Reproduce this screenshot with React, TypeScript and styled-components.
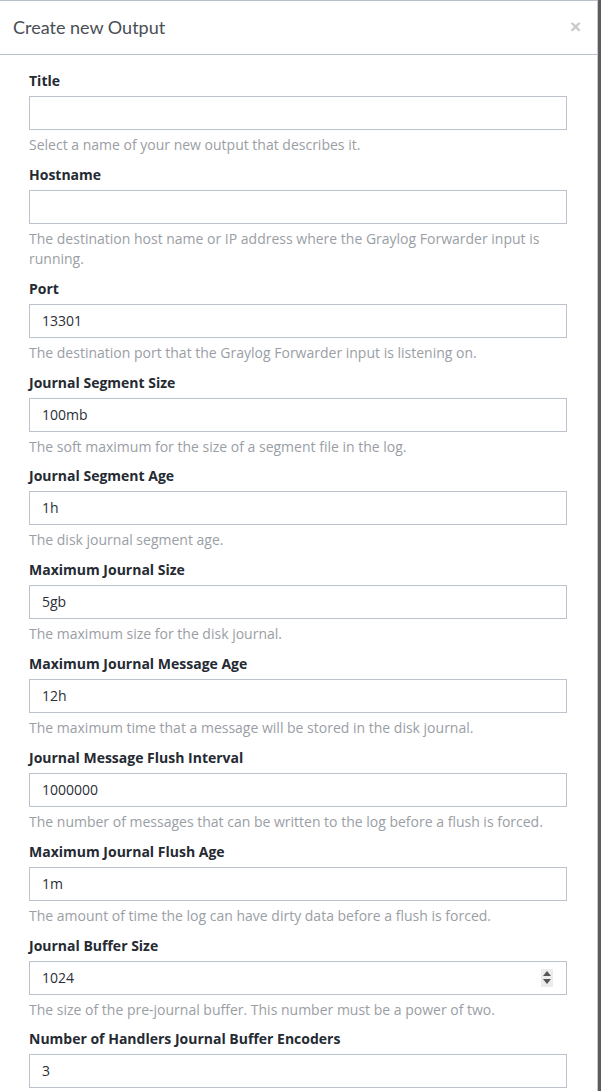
import React from "react";
import styled, { createGlobalStyle } from "styled-components";

const Global = createGlobalStyle`
  html, body { margin: 0; padding: 0; background: #5a5a5a; }
  body { font-family: "Open Sans", sans-serif; }
  * { box-sizing: border-box; }
`;

const Page = styled.div`
  width: 601px;
  height: 1091px;
  overflow: hidden;
  background: #5c5c5c;
`;

const Modal = styled.div`
  width: 598px;
  height: 1091px;
  background: #fff;
  border-top: 1px solid #b8c0cc;
  border-right: 1px solid #c3c9d2;
  display: flex;
  flex-direction: column;
`;

const Header = styled.div`
  height: 54px;
  flex: none;
  display: flex;
  align-items: center;
  justify-content: space-between;
  padding: 0 16px 0 13px;
  border-bottom: 1px solid #b9c1cc;
`;

const HeaderTitle = styled.h4`
  margin: 0;
  font-family: Lato, sans-serif;
  font-size: 18px;
  font-weight: 400;
  color: #4a4e55;
  padding-bottom: 2px;
`;

const Close = styled.span`
  font-size: 19px;
  line-height: 1;
  color: #c8c8c8;
  font-weight: 700;
  margin-top: -3px;
  font-family: "Liberation Sans", sans-serif;
`;

const Body = styled.div`
  padding: 16px 30px 0 29px;
`;

const Group = styled.div`
  margin-bottom: 9.85px;
`;

const Label = styled.label`
  display: block;
  font-size: 14px;
  line-height: 20px;
  font-weight: 700;
  color: #252a33;
  margin-bottom: 5px;
`;

const InputWrap = styled.div`
  position: relative;
`;

const Input = styled.div`
  height: 34px;
  width: 100%;
  border: 1px solid #bcc3cf;
  padding: 0 12px;
  font-size: 14px;
  line-height: 32px;
  color: #2b2f36;
`;

const Spinner = styled.div`
  position: absolute;
  right: 14px;
  top: 8px;
  width: 12px;
  height: 18px;
  background: #ececec;
  display: flex;
  flex-direction: column;
  align-items: center;
  justify-content: center;
  gap: 3px;
`;

const Help = styled.div`
  margin-top: 5px;
  font-size: 14px;
  line-height: 20px;
  color: #9a9ea5;
`;

type Field = { label: string; value?: string; help?: string; number?: boolean };

const fields: Field[] = [
  { label: "Title", help: "Select a name of your new output that describes it." },
  { label: "Hostname", help: "The destination host name or IP address where the Graylog Forwarder input is running." },
  { label: "Port", value: "13301", help: "The destination port that the Graylog Forwarder input is listening on." },
  { label: "Journal Segment Size", value: "100mb", help: "The soft maximum for the size of a segment file in the log." },
  { label: "Journal Segment Age", value: "1h", help: "The disk journal segment age." },
  { label: "Maximum Journal Size", value: "5gb", help: "The maximum size for the disk journal." },
  { label: "Maximum Journal Message Age", value: "12h", help: "The maximum time that a message will be stored in the disk journal." },
  { label: "Journal Message Flush Interval", value: "1000000", help: "The number of messages that can be written to the log before a flush is forced." },
  { label: "Maximum Journal Flush Age", value: "1m", help: "The amount of time the log can have dirty data before a flush is forced." },
  { label: "Journal Buffer Size", value: "1024", number: true, help: "The size of the pre-journal buffer. This number must be a power of two." },
  { label: "Number of Handlers Journal Buffer Encoders", value: "3" },
];

export default function App() {
  return (
    <Page>
      <Global />
      <Modal>
        <Header>
          <HeaderTitle>Create new Output</HeaderTitle>
          <Close>×</Close>
        </Header>
        <Body>
          {fields.map((f) => (
            <Group key={f.label}>
              <Label>{f.label}</Label>
              <InputWrap>
                <Input>{f.value}</Input>
                {f.number && (
                  <Spinner>
                    <svg width="8" height="5" viewBox="0 0 8 5"><path d="M4 0L8 5H0z" fill="#555" /></svg>
                    <svg width="8" height="5" viewBox="0 0 8 5"><path d="M0 0H8L4 5z" fill="#555" /></svg>
                  </Spinner>
                )}
              </InputWrap>
              {f.help && <Help>{f.help}</Help>}
            </Group>
          ))}
        </Body>
      </Modal>
    </Page>
  );
}
